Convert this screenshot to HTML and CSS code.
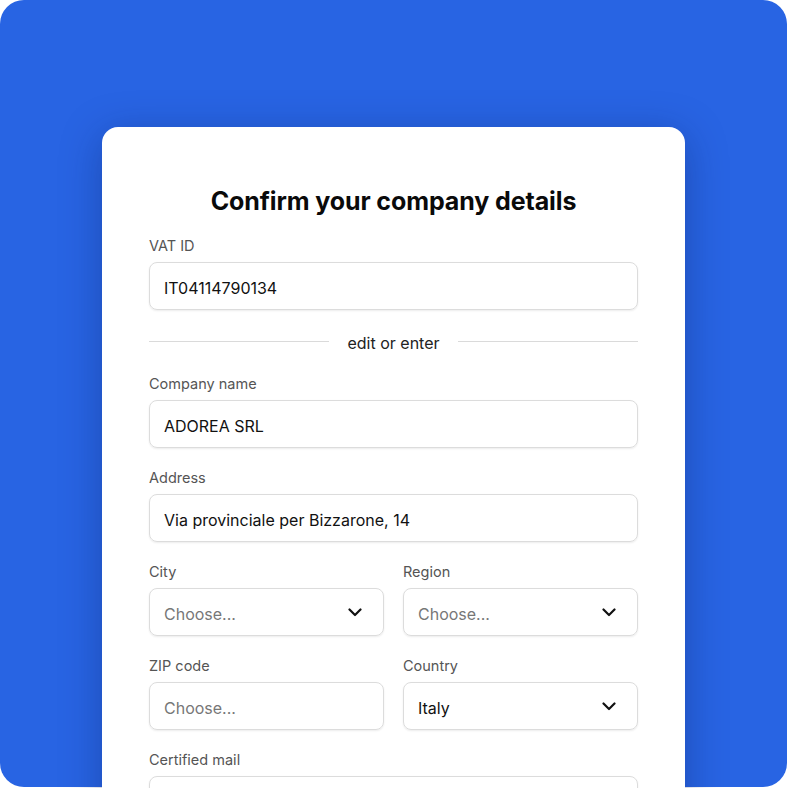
FILE: index.html
```html
<!DOCTYPE html>
<html lang="en">
<head>
<meta charset="utf-8">
<title>Confirm your company details</title>
<link rel="stylesheet" href="styles.css">
</head>
<body>
<div class="stage">
  <div class="card">
    <h1 class="title">Confirm your company details</h1>

    <div class="field field-first">
      <label class="label">VAT ID</label>
      <div class="input">IT04114790134</div>
    </div>

    <div class="divider"><span class="line"></span><span class="divider-text">edit or enter</span><span class="line"></span></div>

    <div class="field field-after-divider">
      <label class="label">Company name</label>
      <div class="input">ADOREA SRL</div>
    </div>

    <div class="field">
      <label class="label">Address</label>
      <div class="input">Via provinciale per Bizzarone, 14</div>
    </div>

    <div class="row">
      <div class="field">
        <label class="label">City</label>
        <div class="input select"><span class="placeholder">Choose...</span>
          <svg class="chev" viewBox="0 0 14 9" width="14" height="9"><path d="M1.5 1.5 L7 7 L12.5 1.5" fill="none" stroke="#111" stroke-width="2.2" stroke-linecap="round" stroke-linejoin="round"/></svg>
        </div>
      </div>
      <div class="field">
        <label class="label">Region</label>
        <div class="input select"><span class="placeholder">Choose...</span>
          <svg class="chev" viewBox="0 0 14 9" width="14" height="9"><path d="M1.5 1.5 L7 7 L12.5 1.5" fill="none" stroke="#111" stroke-width="2.2" stroke-linecap="round" stroke-linejoin="round"/></svg>
        </div>
      </div>
    </div>

    <div class="row">
      <div class="field">
        <label class="label">ZIP code</label>
        <div class="input"><span class="placeholder">Choose...</span></div>
      </div>
      <div class="field">
        <label class="label">Country</label>
        <div class="input select"><span>Italy</span>
          <svg class="chev" viewBox="0 0 14 9" width="14" height="9"><path d="M1.5 1.5 L7 7 L12.5 1.5" fill="none" stroke="#111" stroke-width="2.2" stroke-linecap="round" stroke-linejoin="round"/></svg>
        </div>
      </div>
    </div>

    <div class="field">
      <label class="label">Certified mail</label>
      <div class="input"></div>
    </div>
  </div>
</div>
</body>
</html>
```
FILE: styles.css
```css
html, body {
  margin: 0;
  padding: 0;
  background: #ffffff;
  overflow: hidden;
  height: 788px;
}

body {
  font-family: Inter, "Noto Sans", sans-serif;
  color: #111;
}

.stage {
  width: 787px;
  height: 787px;
  background: #2864e3;
  border-radius: 24px;
  padding-top: 127px;
  box-sizing: border-box;
}

.card {
  margin-left: 102px;
  width: 583px;
  height: 700px;
  background: #fff;
  border-radius: 16px;
  box-sizing: border-box;
  padding: 58px 47px 0 47px;
  box-shadow: 0 8px 40px rgba(10, 30, 90, 0.35);
}

.title {
  margin: 0;
  font-size: 25px;
  line-height: 32px;
  font-weight: 700;
  text-align: center;
  letter-spacing: -0.1px;
  color: #0a0a0a;
}

.field {
  display: flex;
  flex-direction: column;
  margin-top: 20px;
}

.field-first {
  margin-top: 19px;
}

.field-after-divider {
  margin-top: 21px;
}

.label {
  font-size: 14.5px;
  line-height: 20px;
  color: #555;
  margin-bottom: 6px;
  padding-top: 1px;
  margin-top: -1px;
}

.input {
  height: 48px;
  box-sizing: border-box;
  border: 1px solid #dcdcdc;
  border-radius: 8px;
  box-shadow: 0 1px 2px rgba(0, 0, 0, 0.08);
  display: flex;
  align-items: center;
  padding: 3px 14px 0 14px;
  font-size: 16px;
  color: #111;
}

.placeholder {
  color: #777;
}

.select {
  justify-content: space-between;
  padding-right: 21px;
}

.chev {
  display: block;
  margin-top: -3px;
}

.divider {
  display: flex;
  align-items: center;
  margin-top: 19px;
  height: 24px;
}

.divider .line {
  flex: 1;
  height: 1px;
  background: #dadada;
}

.divider-text {
  padding: 3px 18px 0 18px;
  font-size: 16px;
  color: #222;
}

.row {
  display: grid;
  grid-template-columns: 1fr 1fr;
  column-gap: 19px;
}
```
